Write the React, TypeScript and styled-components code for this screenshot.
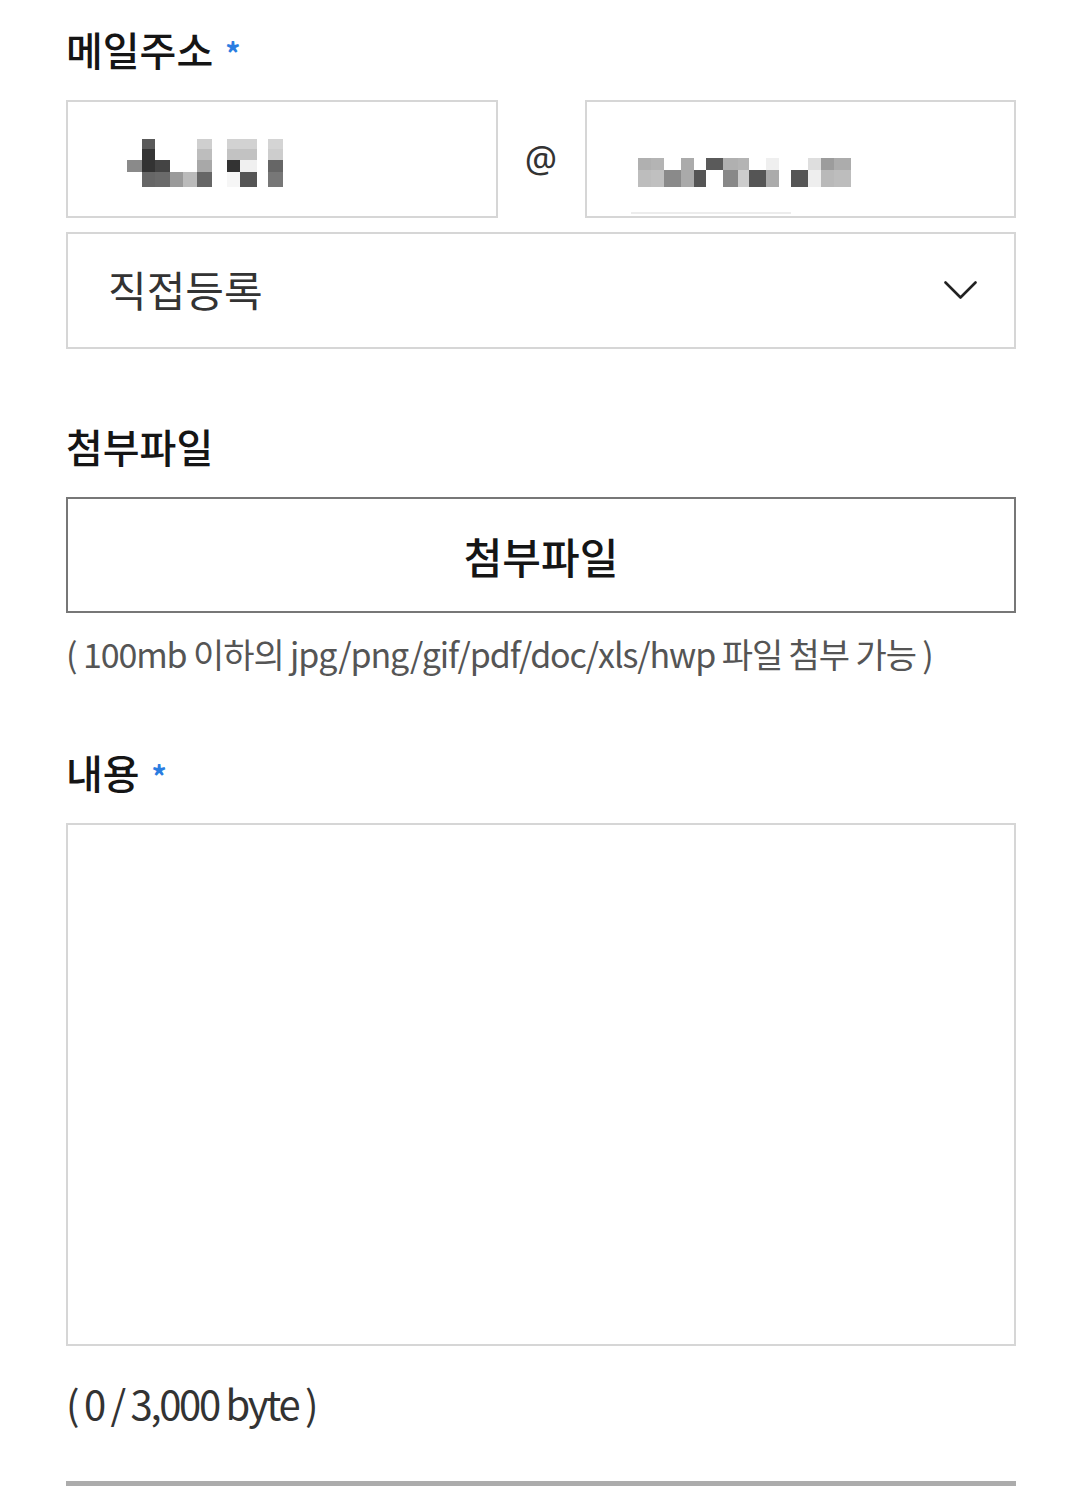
import React from "react";
import styled, { createGlobalStyle } from "styled-components";

const GlobalStyle = createGlobalStyle`
  html, body {
    margin: 0;
    padding: 0;
    background: #ffffff;
  }
  body {
    font-family: "Noto Sans CJK KR", "Noto Sans", sans-serif;
    color: #111111;
  }
`;

const Page = styled.div`
  display: flex;
  flex-direction: column;
  padding: 0 63px 0 66px;
`;

const Label = styled.div<{ $top: number }>`
  display: flex;
  align-items: center;
  gap: 12px;
  height: 50px;
  margin-top: ${(p) => p.$top}px;
  font-size: 40px;
  font-weight: 500;
  letter-spacing: 0;
  color: #151515;
`;

const Star = styled.span`
  color: #2a7de1;
  font-size: 30px;
  font-weight: 700;
  line-height: 1;
  margin-top: 6px;
`;

const EmailRow = styled.div`
  display: grid;
  grid-template-columns: 1fr 87px 1fr;
  margin-top: 26px;
`;

const InputBox = styled.div<{ $padLeft: number; $padTop: number }>`
  box-sizing: border-box;
  height: 118px;
  border: 2px solid #d6d6d6;
  background: #fff;
  display: flex;
  align-items: flex-start;
  padding-left: ${(p) => p.$padLeft}px;
  padding-top: ${(p) => p.$padTop}px;
`;

const At = styled.div`
  display: flex;
  align-items: center;
  justify-content: center;
  font-family: "Noto Sans", sans-serif;
  font-size: 36px;
  color: #333;
  padding-bottom: 2px;
`;

const Select = styled.div`
  box-sizing: border-box;
  height: 117px;
  margin-top: 14px;
  border: 2px solid #d6d6d6;
  display: flex;
  align-items: center;
  justify-content: space-between;
  padding: 0 37px 0 40px;
  font-size: 42px;
  font-weight: 400;
  color: #333;
  letter-spacing: 0;
`;

const SelectText = styled.span`
  margin-top: -4px;
`;

const FileButton = styled.div`
  box-sizing: border-box;
  height: 116px;
  margin-top: 26px;
  border: 2px solid #777;
  display: flex;
  align-items: center;
  justify-content: center;
  font-size: 42px;
  font-weight: 500;
  color: #151515;
  letter-spacing: 0;
`;

const Hint = styled.div`
  margin-top: 21px;
  height: 40px;
  line-height: 40px;
  font-size: 34px;
  color: #555;
  letter-spacing: -1.1px;
  white-space: nowrap;
`;

const TextArea = styled.div`
  box-sizing: border-box;
  height: 523px;
  margin-top: 26px;
  border: 2px solid #d6d6d6;
`;

const ByteCount = styled.div`
  margin-top: 32px;
  height: 50px;
  line-height: 50px;
  font-size: 40px;
  color: #333;
  letter-spacing: -2.3px;
  white-space: nowrap;
`;

const BottomBar = styled.div`
  margin-top: 53px;
  height: 5px;
  background: #acacac;
`;

type Cell = [number, number, number, number, string];

const mosaic1: Cell[] = [
  [15, 0, 13, 10, "#5a5a5a"],
  [70, 0, 15, 10, "#cfcfcf"],
  [100, 0, 13, 10, "#d2d2d2"],
  [113, 0, 17, 10, "#d2d2d2"],
  [141, 0, 15, 10, "#d4d4d4"],
  [15, 10, 13, 11, "#353535"],
  [70, 10, 15, 11, "#bdbdbd"],
  [100, 10, 13, 11, "#c2c2c2"],
  [113, 10, 17, 11, "#c2c2c2"],
  [141, 10, 15, 11, "#cdcdcd"],
  [0, 21, 15, 12, "#8a8a8a"],
  [15, 21, 13, 12, "#333333"],
  [28, 21, 15, 12, "#444444"],
  [70, 21, 15, 12, "#a8a8a8"],
  [100, 21, 13, 12, "#333333"],
  [113, 21, 17, 12, "#f0f0f0"],
  [141, 21, 15, 12, "#666666"],
  [15, 33, 13, 15, "#666666"],
  [28, 33, 15, 15, "#6a6a6a"],
  [43, 33, 13, 15, "#9a9a9a"],
  [56, 33, 14, 15, "#bbbbbb"],
  [70, 33, 15, 15, "#666666"],
  [100, 33, 13, 15, "#f6f6f6"],
  [113, 33, 17, 15, "#555555"],
  [141, 33, 15, 15, "#777777"],
];

const mosaic2: Cell[] = [
  [7, 0, 13, 12, "#b0b0b0"],
  [20, 0, 13, 12, "#b4b4b4"],
  [50, 0, 13, 12, "#ababab"],
  [75, 0, 17, 12, "#5a5a5a"],
  [92, 0, 15, 12, "#b0b0b0"],
  [107, 0, 11, 12, "#b4b4b4"],
  [135, 0, 13, 12, "#efefef"],
  [177, 0, 13, 12, "#dedede"],
  [190, 0, 13, 12, "#9c9c9c"],
  [203, 0, 17, 12, "#acacac"],
  [7, 12, 13, 17, "#bdbdbd"],
  [20, 12, 13, 17, "#c0c0c0"],
  [33, 12, 17, 17, "#8a8a8a"],
  [50, 12, 13, 17, "#aaaaaa"],
  [63, 12, 12, 17, "#555555"],
  [92, 12, 15, 17, "#888888"],
  [107, 12, 11, 17, "#cccccc"],
  [118, 12, 17, 17, "#555555"],
  [135, 12, 13, 17, "#ababab"],
  [160, 12, 17, 17, "#555555"],
  [177, 12, 13, 17, "#eeeeee"],
  [190, 12, 13, 17, "#b9b9b9"],
  [203, 12, 17, 17, "#bdbdbd"],
];

const Mosaic: React.FC<{ cells: Cell[]; w: number; h: number; line?: boolean }> = ({
  cells,
  w,
  h,
  line,
}) => (
  <svg width={w} height={h} viewBox={`0 0 ${w} ${h}`} aria-hidden="true">
    {cells.map(([x, y, cw, ch, c], i) => (
      <rect key={i} x={x} y={y} width={cw} height={ch} fill={c} />
    ))}
    {line && <rect x={0} y={54} width={160} height={2} fill="#ececec" />}
  </svg>
);

const Chevron = () => (
  <svg width="33" height="19" viewBox="0 0 33 19" aria-hidden="true">
    <polyline
      points="1.5,1.5 16.5,16.5 31.5,1.5"
      fill="none"
      stroke="#222"
      strokeWidth="2.6"
      strokeLinecap="round"
      strokeLinejoin="round"
    />
  </svg>
);

export default function App() {
  return (
    <>
      <GlobalStyle />
      <Page>
        <Label $top={24}>
          메일주소 <Star>*</Star>
        </Label>
        <EmailRow>
          <InputBox $padLeft={59} $padTop={37}>
            <Mosaic cells={mosaic1} w={156} h={48} />
          </InputBox>
          <At>@</At>
          <InputBox $padLeft={44} $padTop={56}>
            <Mosaic cells={mosaic2} w={220} h={57} line />
          </InputBox>
        </EmailRow>
        <Select>
          <SelectText>직접등록</SelectText>
          <Chevron />
        </Select>

        <Label $top={72}>첨부파일</Label>
        <FileButton>첨부파일</FileButton>
        <Hint>( 100mb 이하의 jpg/png/gif/pdf/doc/xls/hwp 파일 첨부 가능 )</Hint>

        <Label $top={73}>
          내용 <Star>*</Star>
        </Label>
        <TextArea />
        <ByteCount>( 0 / 3,000 byte )</ByteCount>
        <BottomBar />
      </Page>
    </>
  );
}
